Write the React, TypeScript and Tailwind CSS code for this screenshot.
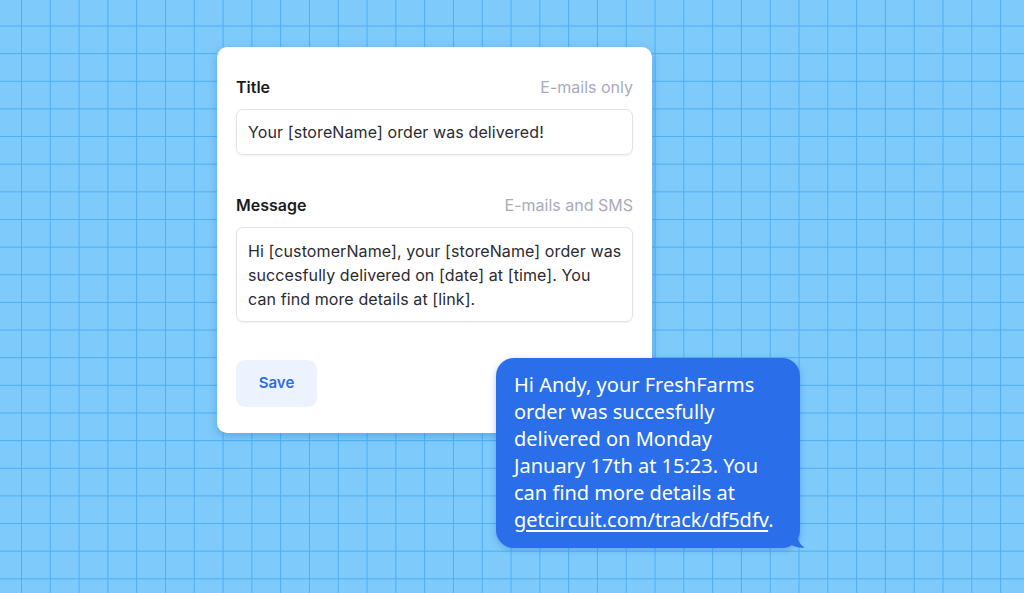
import React from "react";

const gridStyle =
  "bg-[#7ecafb] bg-[linear-gradient(to_right,#4caef4_1.2px,transparent_1.2px),linear-gradient(to_bottom,#4caef4_1.2px,transparent_1.2px)] bg-[length:28.8px_27.65px] bg-[position:21px_25.5px]";

const Field = ({ label, hint, children }: { label: string; hint: string; children: React.ReactNode }) => (
  <div className="flex flex-col">
    <div className="flex items-center justify-between h-[24px]">
      <span className="text-[16px] font-semibold text-[#1b1b1f]">{label}</span>
      <span className="text-[16px] text-[#a9abbd]">{hint}</span>
    </div>
    {children}
  </div>
);

export default function App() {
  return (
    <div className={`relative w-[1024px] h-[593px] overflow-hidden ${gridStyle}`}>
      {/* Notification template card */}
      <div className="ml-[217px] mt-[47px] w-[435px] h-[386px] bg-white rounded-[10px] shadow-[0_3px_8px_rgba(30,100,180,0.35)] px-[19px] pt-[28px] font-['Inter',sans-serif]">
        <Field label="Title" hint="E-mails only">
          <div className="mt-[10px] h-[46px] rounded-[7px] border border-[#e1e3ea] shadow-[0_1px_2px_rgba(0,0,0,0.06)] px-[11px] flex items-center text-[16px] tracking-[0.1px] text-[#2b2b30]">
            Your [storeName] order was delivered!
          </div>
        </Field>

        <div className="mt-[38px]">
          <Field label="Message" hint="E-mails and SMS">
            <div className="mt-[10px] h-[95px] rounded-[7px] border border-[#e1e3ea] shadow-[0_1px_2px_rgba(0,0,0,0.06)] px-[11px] pt-[3px] text-[16px] tracking-[0.1px] leading-[23.7px] text-[#2b2b30] flex items-center">
              <p className="whitespace-nowrap">
                Hi [customerName], your [storeName] order was
                <br />
                succesfully delivered on [date] at [time]. You
                <br />
                can find more details at [link].
              </p>
            </div>
          </Field>
        </div>

        <button className="mt-[38px] w-[81px] h-[47px] rounded-[9px] bg-[#edf3fe] text-[#2d6fe9] text-[15px] font-semibold">
          Save
        </button>
      </div>

      {/* SMS bubble */}
      <div className="absolute left-[496px] top-[358px] w-[304px]">
        <div className="rounded-[18px] bg-[#2a6fe9] pl-[18px] pr-[14px] pt-[13px] pb-[15px] text-white text-[20px] leading-[27px] font-['Noto_Sans',sans-serif] shadow-[0_2px_6px_rgba(20,80,170,0.3)] whitespace-nowrap">
          Hi Andy, your FreshFarms
          <br />
          order was succesfully
          <br />
          delivered on Monday
          <br />
          January 17th at 15:23. You
          <br />
          can find more details at
          <br />
          <span className="underline underline-offset-[3px] decoration-[1.5px]">getcircuit.com/track/df5dfv</span>.
        </div>
        <svg className="absolute right-[-8px] bottom-0" width="20" height="16" viewBox="0 0 20 16">
          <path d="M0 0 L9 0 C9 8 12 13 17 15.5 C12 16.5 6 15 2 12 Z" fill="#2a6fe9" />
        </svg>
      </div>
    </div>
  );
}
